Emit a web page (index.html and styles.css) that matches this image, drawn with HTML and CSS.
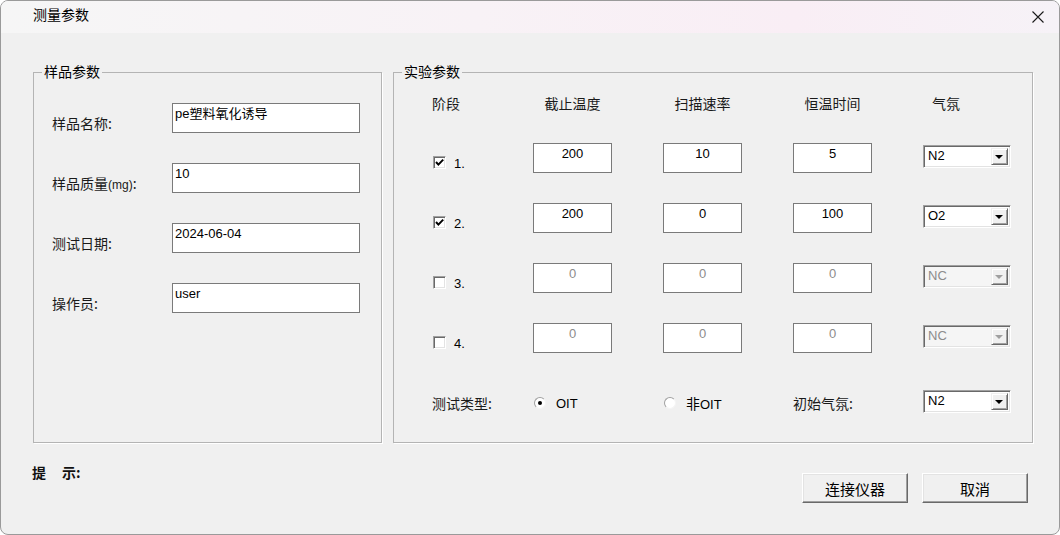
FILE: index.html
```html
<!DOCTYPE html>
<html lang="zh-CN">
<head>
    <meta charset="UTF-8">
    <title>测量参数</title>
    <link rel="stylesheet" href="styles.css">
</head>
<body>
    <div class="window">
        <div class="titlebar">
            <span class="title">测量参数</span>
            <svg class="close" width="12" height="12" viewBox="0 0 12 12">
                <path d="M0.5 0.5 L11.5 11.5 M11.5 0.5 L0.5 11.5" stroke="#1a1a1a" stroke-width="1.1" fill="none"/>
            </svg>
        </div>

        <div class="groups">
            <!-- 样品参数 -->
            <fieldset class="group sample">
                <legend>样品参数</legend>
                <div class="sample-grid">
                    <label class="cell-label">样品名称:</label>
                    <div class="edit">pe塑料氧化诱导</div>

                    <label class="cell-label">样品质量<span class="unit">(mg)</span>:</label>
                    <div class="edit">10</div>

                    <label class="cell-label">测试日期:</label>
                    <div class="edit">2024-06-04</div>

                    <label class="cell-label">操作员:</label>
                    <div class="edit">user</div>
                </div>
            </fieldset>

            <!-- 实验参数 -->
            <fieldset class="group experiment">
                <legend>实验参数</legend>
                <div class="stage-grid">
                    <div class="head left">阶段</div>
                    <div class="head">截止温度</div>
                    <div class="head">扫描速率</div>
                    <div class="head">恒温时间</div>
                    <div class="head gas">气氛</div>

                    <div class="stage"><span class="check on"><svg width="9" height="9" viewBox="0 0 9 9"><path d="M1 4 L3.4 6.6 L8.2 1.6" stroke="#000" stroke-width="2" fill="none"/></svg></span><span class="num">1.</span></div>
                    <div class="num-edit">200</div>
                    <div class="num-edit">10</div>
                    <div class="num-edit">5</div>
                    <div class="combo"><span class="val">N2</span><span class="arrow"></span></div>

                    <div class="stage"><span class="check on"><svg width="9" height="9" viewBox="0 0 9 9"><path d="M1 4 L3.4 6.6 L8.2 1.6" stroke="#000" stroke-width="2" fill="none"/></svg></span><span class="num">2.</span></div>
                    <div class="num-edit">200</div>
                    <div class="num-edit">0</div>
                    <div class="num-edit">100</div>
                    <div class="combo"><span class="val">O2</span><span class="arrow"></span></div>

                    <div class="stage"><span class="check"></span><span class="num">3.</span></div>
                    <div class="num-edit disabled">0</div>
                    <div class="num-edit disabled">0</div>
                    <div class="num-edit disabled">0</div>
                    <div class="combo disabled"><span class="val">NC</span><span class="arrow"></span></div>

                    <div class="stage"><span class="check"></span><span class="num">4.</span></div>
                    <div class="num-edit disabled">0</div>
                    <div class="num-edit disabled">0</div>
                    <div class="num-edit disabled">0</div>
                    <div class="combo disabled"><span class="val">NC</span><span class="arrow"></span></div>

                    <div class="cell-label">测试类型:</div>
                    <div class="radio-cell"><span class="radio on"></span><span class="latin">OIT</span></div>
                    <div class="radio-cell"><span class="radio"></span><span>非<span class="latin">OIT</span></span></div>
                    <div class="cell-label">初始气氛:</div>
                    <div class="combo low"><span class="val">N2</span><span class="arrow"></span></div>
                </div>
            </fieldset>
        </div>

        <div class="footer">
            <div class="hint">提<span class="hint-gap"></span>示:</div>
            <div class="buttons">
                <button class="btn">连接仪器</button>
                <button class="btn">取消</button>
            </div>
        </div>
    </div>
</body>
</html>
```

FILE: styles.css
```css
html, body {
    margin: 0;
    padding: 0;
    background: #ffffff;
}
body {
    font-family: "Liberation Sans", "Noto Sans CJK SC", sans-serif;
    font-size: 14px;
    color: #000;
}
.window {
    box-sizing: border-box;
    width: 1060px;
    height: 535px;
    border: 1px solid #9a9a9a;
    border-radius: 8px;
    background: #f0f0f0;
    overflow: hidden;
}
.titlebar {
    height: 32px;
    display: flex;
    align-items: center;
    justify-content: space-between;
    padding: 0 15px 0 32px;
    background: linear-gradient(90deg, #f6f6f6 0%, #f8f2f6 45%, #f9eef5 75%, #f6f2f7 100%);
}
.title {
    font-family: "Noto Sans CJK SC", sans-serif;
    font-size: 14px;
    line-height: 20px;
    margin-top: -7px;
}
.close {
    margin-top: -1px;
}
.groups {
    display: flex;
    gap: 11px;
    margin-top: 29px;
    padding-left: 32px;
}
.group {
    box-sizing: border-box;
    margin: 0;
    padding: 0;
    height: 381px;
    border: 1px solid #b4b4b4;
    box-shadow: 1px 1px 0 #ffffff;
}
.group legend {
    margin-left: 8px;
    padding: 0 2px;
    font-family: "Noto Sans CJK SC", sans-serif;
    font-size: 14px;
    line-height: 20px;
    position: relative;
    top: -1px;
}
.sample {
    width: 349px;
}
.experiment {
    width: 640px;
}
.cell-label {
    font-family: "Noto Sans CJK SC", sans-serif;
    font-size: 14px;
    line-height: 20px;
    padding-top: 10px;
    color: #1a1a1a;
}
.unit {
    font-family: "Liberation Sans", sans-serif;
    font-size: 12px;
}

/* left side */
.sample-grid {
    display: grid;
    grid-template-columns: 120px 188px;
    grid-auto-rows: 60px;
    padding: 21px 0 0 18px;
}
.edit {
    box-sizing: border-box;
    height: 30px;
    background: #fff;
    border: 1px solid #7a7a7a;
    padding: 1px 2px 0;
    font-size: 13px;
    line-height: 17px;
    font-family: "Liberation Sans", "Noto Sans CJK SC", sans-serif;
    white-space: nowrap;
}

/* right side */
.stage-grid {
    display: grid;
    grid-template-columns: 101px 130px 130px 130px 88px;
    grid-template-rows: 60px 60px 60px 60px 60px 60px;
    padding: 1px 0 0 38px;
}
.head {
    width: 79px;
    text-align: center;
    padding-top: 10px;
    line-height: 20px;
    font-family: "Noto Sans CJK SC", sans-serif;
    font-size: 14px;
    color: #1a1a1a;
}
.head.left, .head.gas {
    text-align: left;
}
.head.gas {
    padding-left: 9px;
}
.stage {
    display: flex;
    align-items: center;
    height: 13px;
    margin-top: 13px;
    padding-left: 1px;
}
.check {
    box-sizing: border-box;
    width: 13px;
    height: 13px;
    background: #fff;
    border-top: 1px solid #a0a0a0;
    border-left: 1px solid #a0a0a0;
    border-right: 1px solid #ffffff;
    border-bottom: 1px solid #ffffff;
    box-shadow: inset 1px 1px 0 #696969, inset -1px -1px 0 #e3e3e3;
    display: flex;
    align-items: center;
    justify-content: center;
}
.num {
    margin-left: 8px;
    font-size: 13px;
    line-height: 16px;
    margin-top: 2px;
}
.num-edit {
    box-sizing: border-box;
    width: 79px;
    height: 30px;
    background: #fff;
    border: 1px solid #7a7a7a;
    text-align: center;
    font-size: 13px;
    line-height: 17px;
    padding-top: 1px;
}
.num-edit.disabled {
    color: #8c8c8c;
}
.combo {
    box-sizing: border-box;
    width: 88px;
    height: 23px;
    margin-top: 2px;
    position: relative;
    background: #fff;
    border-top: 1px solid #a0a0a0;
    border-left: 1px solid #a0a0a0;
    border-right: 1px solid #ffffff;
    border-bottom: 1px solid #ffffff;
    box-shadow: inset 1px 1px 0 #696969, inset -1px -1px 0 #e3e3e3;
    font-size: 13px;
    line-height: 19px;
    padding-left: 4px;
}
.combo.low {
    margin-top: 7px;
}
.combo.disabled {
    background: #f5f5f5;
    color: #8c8c8c;
}
.combo .arrow {
    position: absolute;
    top: 2px;
    right: 2px;
    box-sizing: border-box;
    width: 17px;
    height: 17px;
    background: #f0f0f0;
    border-top: 1px solid #f0f0f0;
    border-left: 1px solid #f0f0f0;
    border-right: 1px solid #696969;
    border-bottom: 1px solid #696969;
    box-shadow: inset 1px 1px 0 #ffffff, inset -1px -1px 0 #a0a0a0;
}
.combo .arrow::after {
    content: "";
    position: absolute;
    left: 3px;
    top: 6px;
    border-left: 4px solid transparent;
    border-right: 4px solid transparent;
    border-top: 4px solid #000;
}
.combo.disabled .arrow::after {
    border-top-color: #a0a0a0;
}
.radio-cell {
    display: flex;
    align-items: center;
    gap: 10px;
    height: 20px;
    padding-top: 10px;
    padding-left: 1px;
    font-family: "Noto Sans CJK SC", sans-serif;
    font-size: 14px;
}
.latin {
    font-family: "Liberation Sans", sans-serif;
    font-size: 13px;
}
.radio {
    box-sizing: border-box;
    width: 12px;
    height: 12px;
    border-radius: 50%;
    background: #fff;
    border: 1px solid #a0a0a0;
    border-right-color: #f4f4f4;
    border-bottom-color: #f4f4f4;
    position: relative;
}
.radio.on::after {
    content: "";
    position: absolute;
    left: 3px;
    top: 3px;
    width: 4px;
    height: 4px;
    border-radius: 50%;
    background: #000;
}

/* footer */
.footer {
    display: flex;
    justify-content: space-between;
    padding: 0 31px 0 31px;
}
.hint {
    padding-top: 19px;
    line-height: 20px;
    font-family: "Noto Sans CJK SC", sans-serif;
    font-size: 14px;
    font-weight: bold;
    color: #111;
}
.hint-gap {
    display: inline-block;
    width: 16px;
}
.buttons {
    display: flex;
    gap: 14px;
    margin-top: 30px;
}
.btn {
    box-sizing: border-box;
    width: 106px;
    height: 30px;
    margin: 0;
    padding: 0;
    background: #f0f0f0;
    border-top: 1px solid #ffffff;
    border-left: 1px solid #ffffff;
    border-right: 1px solid #696969;
    border-bottom: 1px solid #696969;
    box-shadow: inset -1px -1px 0 #a0a0a0, inset 1px 1px 0 #e3e3e3;
    font-family: "Noto Sans CJK SC", sans-serif;
    font-size: 15px;
    color: #000;
}
```
